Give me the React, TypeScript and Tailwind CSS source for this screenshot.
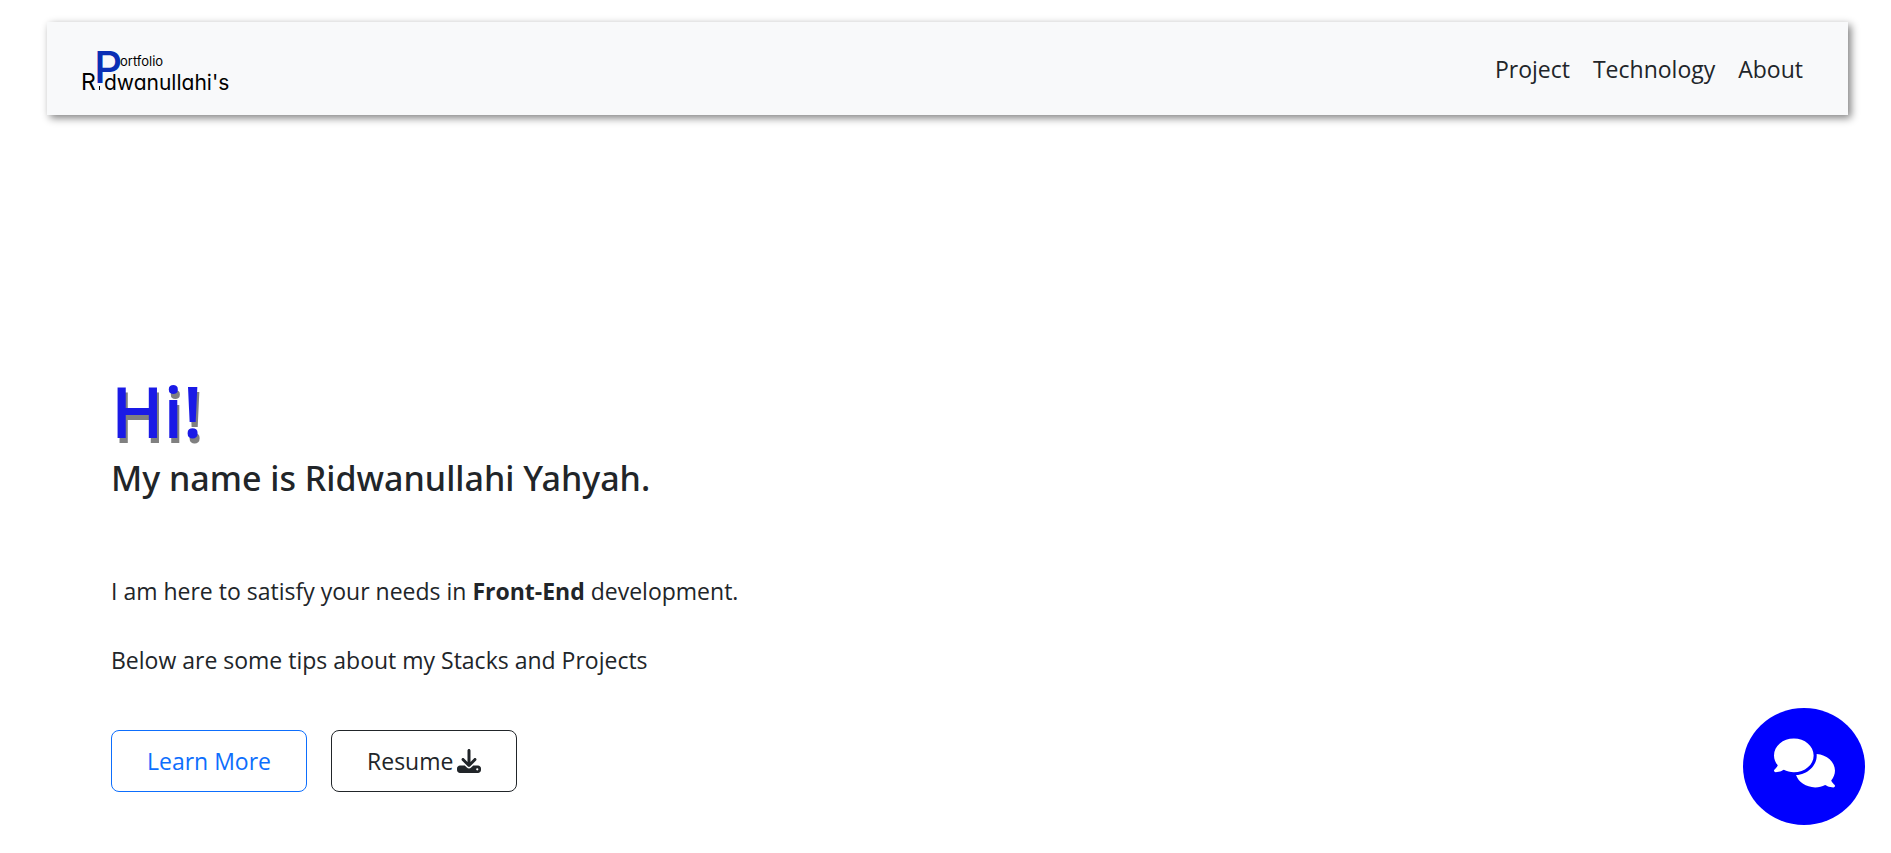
import React from "react";
import { FaComments, FaDownload } from "react-icons/fa6";

const links = ["Project", "Technology", "About"];

function Logo() {
  return (
    <svg width="152" height="52" viewBox="0 0 152 52" role="img" aria-label="Portfolio Ridwanullahi's" className="overflow-visible font-['Inter',sans-serif] [font-feature-settings:'cv11']">
      <text x="-1" y="47" fontSize="23" fill="#000">R</text>
      <text x="22" y="47" fontSize="21" fill="#000">dwanullahi's</text>
      <text x="12" y="40" fontSize="44" fontWeight="500" fill="#0a2fb5">P</text>
      <text x="38" y="23" fontSize="13" fill="#000">ortfolio</text>
      <path d="M17.500 43v4" stroke="#000" strokeWidth="1" />
    </svg>
  );
}

export default function App() {
  return (
    <div className="bg-white font-['Open_Sans','Noto_Sans',sans-serif] text-[#212529]">
      <header className="pt-[22px] pr-[43px] pl-[47px]">
        <nav className="flex h-[93px] items-center justify-between bg-[#f8f9fa] pr-[45px] pl-[35px] shadow-[3px_3px_8px_gray]">
          <a href="#home">
            <Logo />
          </a>
          <ul className="flex gap-[23px] text-[23px] leading-9">
            {links.map((link) => (
              <li key={link}>
                <a href={"#" + link.toLowerCase()}>{link}</a>
              </li>
            ))}
          </ul>
        </nav>
      </header>

      <main className="px-[111px] pt-[253px]">
        <h1 className="text-[70px] leading-[86px] font-semibold text-[#1a1ae6] [text-shadow:2px_5px_gray]">Hi!</h1>
        <h2 className="mt-0.5 font-['Noto_Sans',sans-serif] text-[34px] leading-[44px] font-medium">My name is Ridwanullahi Yahyah.</h2>
        <p className="mt-[73px] text-[23px] leading-9">
          I am here to satisfy your needs in <b className="font-bold">Front-End</b> development.
        </p>
        <p className="mt-[33px] text-[23px] leading-9">Below are some tips about my Stacks and Projects</p>
        <div className="mt-[52px] flex gap-6 text-[23px] leading-9">
          <button type="button" className="h-[62px] rounded-lg border border-[#0d6efd] px-[35px] text-[#0d6efd]">
            Learn More
          </button>
          <button type="button" className="flex h-[62px] items-center gap-1 rounded-lg border border-[#212529] px-[35px]">
            Resume <FaDownload className="size-6" />
          </button>
        </div>
      </main>

      <button
        type="button"
        aria-label="Chat"
        className="fixed right-[26px] bottom-7 flex h-[117px] w-[122px] items-center justify-center rounded-[50%] bg-[#0000ff] pb-2 text-white"
      >
        <FaComments className="h-[54px] w-[61px]" />
      </button>
    </div>
  );
}
